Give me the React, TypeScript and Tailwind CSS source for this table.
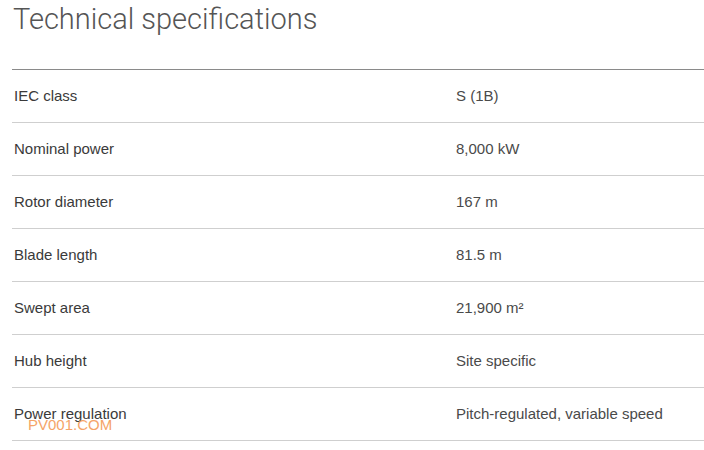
const specs = [
  { label: "IEC class", value: "S (1B)" },
  { label: "Nominal power", value: "8,000 kW" },
  { label: "Rotor diameter", value: "167 m" },
  { label: "Blade length", value: "81.5 m" },
  { label: "Swept area", value: "21,900 m²" },
  { label: "Hub height", value: "Site specific" },
  { label: "Power regulation", value: "Pitch-regulated, variable speed" },
]

export default function App() {
  return (
    <div className="w-[704px] h-[450px] overflow-hidden bg-white font-['Liberation_Sans',Arial,sans-serif]">
      <h1 className="pl-[13px] pt-[1px] h-[69px] text-[29px] leading-[36px] font-light text-[#555] font-['Roboto',sans-serif]">
        Technical specifications
      </h1>
      <div className="ml-[12px] border-t border-[#8a8a8a]">
        {specs.map((row) => (
          <div
            key={row.label}
            className="relative flex items-center h-[53px] pt-[1px] border-b border-[#cfcfcf] text-[15px]"
          >
            <span className="w-[444px] pl-[2px] text-[#3a3a3a]">{row.label}</span>
            <span className="text-[#4a4a4a]">{row.value}</span>
            {row.label === "Power regulation" && (
              <span className="absolute left-[16px] top-[28px] text-[15px] leading-[18px] text-[#f5a468]">
                PV001.COM
              </span>
            )}
          </div>
        ))}
      </div>
    </div>
  )
}
